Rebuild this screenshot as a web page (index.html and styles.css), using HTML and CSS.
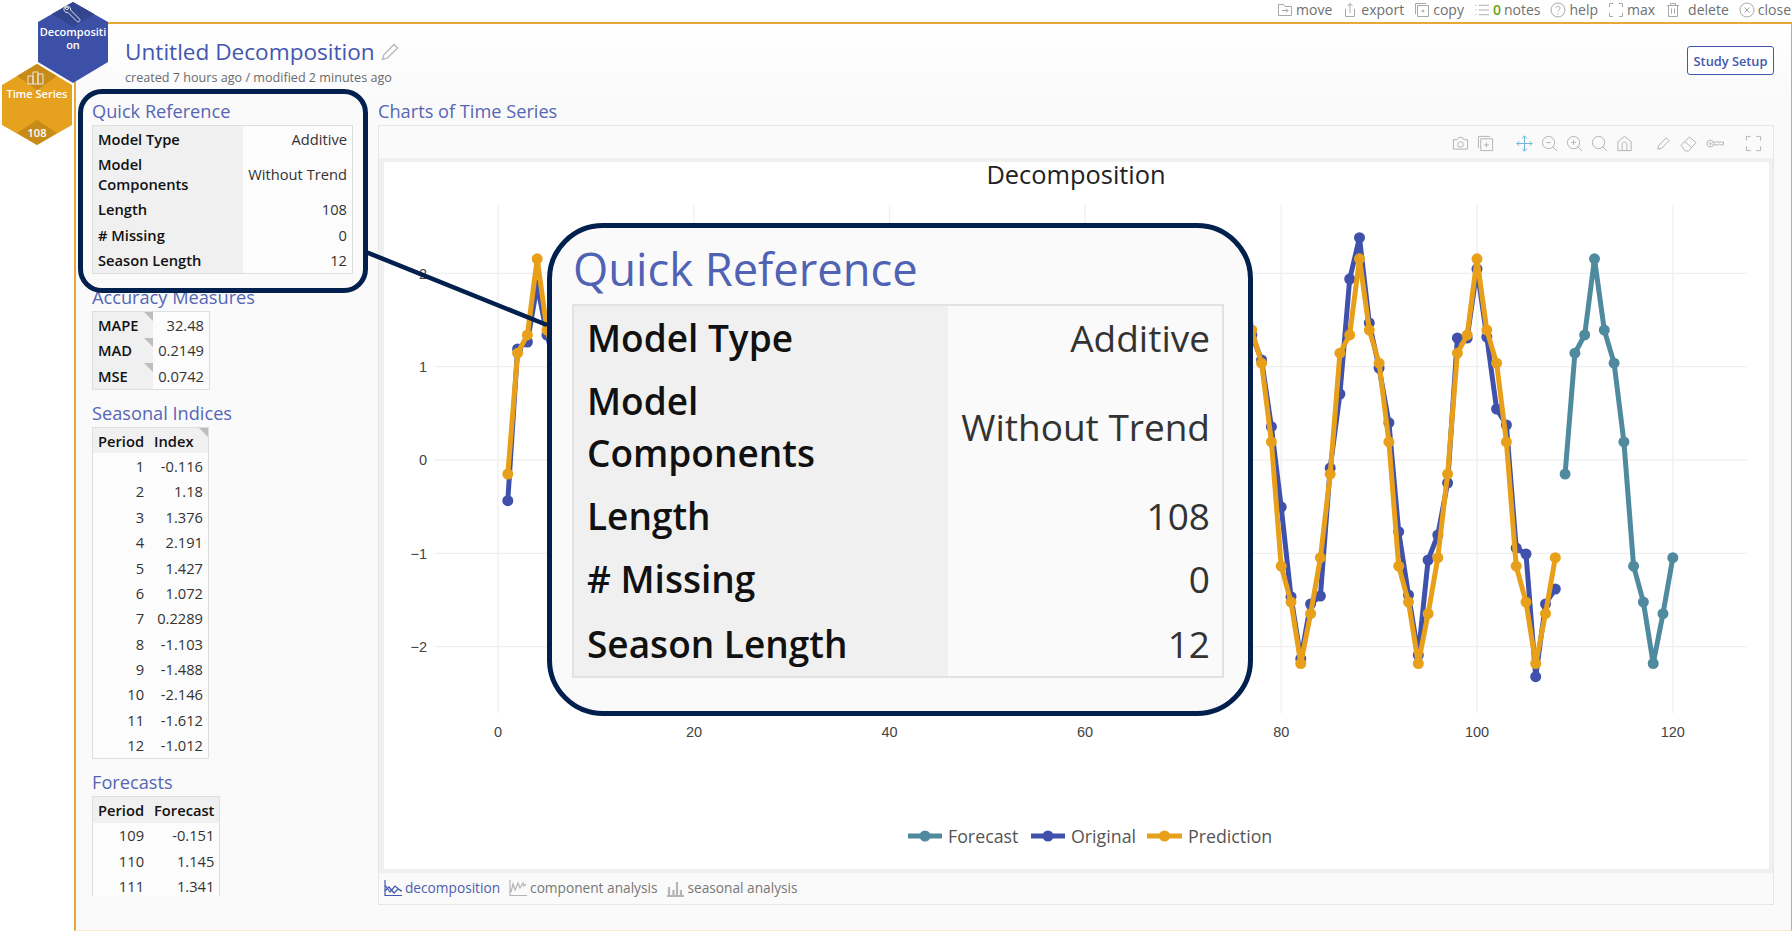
FILE: index.html
```html
<!DOCTYPE html>
<html lang="en">
<head>
<meta charset="utf-8">
<title>Untitled Decomposition</title>
<link rel="stylesheet" href="styles.css">
</head>
<body>
<div class="page">
  <nav class="topbar">
    <span class="tool"><svg class="ic" viewBox="0 0 16 16"><path d="M1.500 2.500h5l1.500 2h6.500v9h-13z"/><path d="M5 8.500h6M9 6.500l2 2-2 2"/></svg>move</span>
    <span class="tool"><svg class="ic" viewBox="0 0 16 16"><path d="M8 11V1.500M5.500 4 8 1.500 10.500 4M3.500 7v7.500h9V7"/></svg>export</span>
    <span class="tool"><svg class="ic" viewBox="0 0 16 16"><path d="M1.500 12V1.500H12"/><path d="M3.500 3.500h11v11h-11zM9 7.500v3M7.500 9h3"/></svg>copy</span>
    <span class="tool"><svg class="ic" viewBox="0 0 17 16"><path d="M5 3h11M5 8h11M5 13h11M1.500 3h1M1.500 8h1M1.500 13h1"/></svg><b class="zero">0</b>notes</span>
    <span class="tool"><svg class="ic" viewBox="0 0 16 16"><circle cx="8" cy="8" r="7"/><path d="M6 6.200c0-2.600 4-2.600 4 0 0 1.600-2 1.600-2 3.300M8 11v1.200"/></svg>help</span>
    <span class="tool"><svg class="ic" viewBox="0 0 16 16"><path d="M1.500 5V1.500H5M11 1.500h3.500V5M14.500 11v3.500H11M5 14.500H1.500V11"/></svg>max</span>
    <span class="tool tool-wide"><svg class="ic" viewBox="0 0 16 16"><path d="M2 3.500h12M5.500 3.500V1.500h5v2M3.500 3.500v11h9v-11M6.500 6.500v5M9.500 6.500v5"/></svg>delete</span>
    <span class="tool"><svg class="ic" viewBox="0 0 16 16"><circle cx="8" cy="8" r="7"/><path d="m5.500 5.500 5 5M10.500 5.500l-5 5"/></svg>close</span>
  </nav>

  <div class="frame">
    <header class="head">
      <div class="head-text">
        <h1 class="title">Untitled Decomposition <svg class="pencil" viewBox="0 0 18 18"><path d="M1.500 16.500 3 11.500 13 1.500l3.500 3.500-10 10z"/></svg></h1>
        <p class="stamp">created 7 hours ago / modified 2 minutes ago</p>
      </div>
      <button class="setup">Study Setup</button>
    </header>

    <div class="body">
      <aside class="side">
        <section class="sec">
          <h2 class="sec-title">Quick Reference</h2>
          <table class="tbl tbl-qr">
            <tr><th>Model Type</th><td>Additive</td></tr>
            <tr><th>Model<br>Components</th><td>Without Trend</td></tr>
            <tr><th>Length</th><td>108</td></tr>
            <tr><th># Missing</th><td>0</td></tr>
            <tr><th>Season Length</th><td>12</td></tr>
          </table>
        </section>
        <section class="sec">
          <h2 class="sec-title">Accuracy Measures</h2>
          <table class="tbl tbl-acc">
            <tr><th class="note">MAPE</th><td>32.48</td></tr>
            <tr><th class="note">MAD</th><td>0.2149</td></tr>
            <tr><th class="note">MSE</th><td>0.0742</td></tr>
          </table>
        </section>
        <section class="sec">
          <h2 class="sec-title">Seasonal Indices</h2>
          <table class="tbl tbl-grid tbl-si">
            <thead><tr><th>Period</th><th class="note">Index</th></tr></thead>
            <tbody>
              <tr><td>1</td><td>-0.116</td></tr>
              <tr><td>2</td><td>1.18</td></tr>
              <tr><td>3</td><td>1.376</td></tr>
              <tr><td>4</td><td>2.191</td></tr>
              <tr><td>5</td><td>1.427</td></tr>
              <tr><td>6</td><td>1.072</td></tr>
              <tr><td>7</td><td>0.2289</td></tr>
              <tr><td>8</td><td>-1.103</td></tr>
              <tr><td>9</td><td>-1.488</td></tr>
              <tr><td>10</td><td>-2.146</td></tr>
              <tr><td>11</td><td>-1.612</td></tr>
              <tr><td>12</td><td>-1.012</td></tr>
            </tbody>
          </table>
        </section>
        <section class="sec">
          <h2 class="sec-title">Forecasts</h2>
          <table class="tbl tbl-grid tbl-fc">
            <thead><tr><th>Period</th><th>Forecast</th></tr></thead>
            <tbody>
              <tr><td>109</td><td>-0.151</td></tr>
              <tr><td>110</td><td>1.145</td></tr>
              <tr><td>111</td><td>1.341</td></tr>
            </tbody>
          </table>
        </section>
      </aside>

      <main class="charts">
        <h2 class="sec-title">Charts of Time Series</h2>
        <div class="panel">
          <div class="modebar">
            <svg class="mb" viewBox="0 0 18 18"><path d="M1.500 5h4l1.500-2.500h4L12.500 5h4v10h-15z"/><circle cx="9" cy="10" r="3"/></svg>
            <svg class="mb" viewBox="0 0 18 18"><path d="M1.500 14V1.500H14"/><path d="M4 4h12.500v12.500H4zM10 8v5M7.500 10.500h5"/></svg>
            <svg class="mb mb-blue mb-g2" viewBox="0 0 18 18"><path d="M9 1v16M1 9h16M6.500 3.500 9 1l2.500 2.500M6.500 14.500 9 17l2.500-2.500M3.500 6.500 1 9l2.500 2.500M14.500 6.500 17 9l-2.500 2.500"/></svg>
            <svg class="mb" viewBox="0 0 18 18"><circle cx="8" cy="8" r="6.500"/><path d="m12.500 12.500 4.500 4.500M5.500 8h5"/></svg>
            <svg class="mb" viewBox="0 0 18 18"><circle cx="8" cy="8" r="6.500"/><path d="m12.500 12.500 4.500 4.500M5.500 8h5M8 5.500v5"/></svg>
            <svg class="mb" viewBox="0 0 18 18"><circle cx="8" cy="8" r="6.500"/><path d="m12.500 12.500 4.500 4.500"/></svg>
            <svg class="mb" viewBox="0 0 18 18"><path d="M2 16.500V7l7-5.500L16 7v9.500zM6.500 16.500V9.500c0-2.800 5-2.800 5 0v7"/></svg>
            <svg class="mb mb-g2" viewBox="0 0 18 18"><path d="m3 15 1-4 8-8 3 3-8 8z"/></svg>
            <svg class="mb" viewBox="0 0 18 18"><path d="M1 11 10 2l7 6-8 9h-3zM5 7l7 6"/></svg>
            <svg class="mb mb-wide" viewBox="0 0 20 18"><circle cx="5" cy="9" r="3.500"/><circle cx="5" cy="9" r="1"/><path d="M8.500 7.500H19v3h-3l-1-1-1 1H8.500"/></svg>
            <svg class="mb mb-g4" viewBox="0 0 18 18"><path d="M1.500 6V1.500H6M12 1.500h4.500V6M16.500 12v4.500H12M6 16.500H1.500V12"/></svg>
          </div>
          <div class="plot">
            <svg class="plot-svg" viewBox="384 162 1385 707">
              <defs>
                <marker id="dot-b" markerUnits="userSpaceOnUse" markerWidth="12" markerHeight="12" refX="6" refY="6"><circle cx="6" cy="6" r="5.500" fill="#3f51ab"/></marker>
                <marker id="dot-o" markerUnits="userSpaceOnUse" markerWidth="12" markerHeight="12" refX="6" refY="6"><circle cx="6" cy="6" r="5.500" fill="#e8a01a"/></marker>
                <marker id="dot-t" markerUnits="userSpaceOnUse" markerWidth="12" markerHeight="12" refX="6" refY="6"><circle cx="6" cy="6" r="5.500" fill="#4f8a9e"/></marker>
              </defs>
              <text class="chart-title" x="1076" y="184" text-anchor="middle">Decomposition</text>
              <g class="grid">
                <path d="M498 205V713M694 205V713M889.500 205V713M1085 205V713M1281.200 205V713M1477 205V713M1672.800 205V713"/>
                <path d="M435 273.400H1747M435 366.700H1747M435 460H1747M435 553.300H1747M435 646.600H1747"/>
              </g>
              <g class="ticks">
                <text x="427" y="278.500" text-anchor="end">2</text>
                <text x="427" y="372" text-anchor="end">1</text>
                <text x="427" y="465" text-anchor="end">0</text>
                <text x="427" y="558.500" text-anchor="end">−1</text>
                <text x="427" y="652" text-anchor="end">−2</text>
                <text x="498" y="737" text-anchor="middle">0</text>
                <text x="694" y="737" text-anchor="middle">20</text>
                <text x="889.500" y="737" text-anchor="middle">40</text>
                <text x="1085" y="737" text-anchor="middle">60</text>
                <text x="1281.200" y="737" text-anchor="middle">80</text>
                <text x="1477" y="737" text-anchor="middle">100</text>
                <text x="1672.800" y="737" text-anchor="middle">120</text>
              </g>
              <polyline class="s s-t" points="1565.100,474.100 1574.900,353.200 1584.700,334.900 1594.500,258.800 1604.300,330.100 1614.100,363.200 1623.900,441.900 1633.600,566.200 1643.400,602.100 1653.200,663.500 1663,613.700 1672.800,557.700"/>
              <polyline class="s s-b" points="507.800,500.700 517.600,349 527.400,342 537.200,285 547,335 556.700,370"/>
              <polyline class="s s-b" points="1242,270 1251.800,335 1261.600,360 1271.400,426.700 1281.200,507 1291,596.700 1300.800,658.700 1310.600,604 1320.400,596 1330.200,468 1339.900,394 1349.700,279 1359.500,237.700 1369.300,323 1379.100,368 1388.900,422.700 1398.700,531.700 1408.500,595 1418.300,655 1428.100,560 1437.800,535 1447.600,483 1457.400,338 1467.200,338 1477,269 1486.800,337 1496.600,409 1506.400,425 1516.200,548 1526,554 1535.700,676.700 1545.500,604 1555.300,589"/>
              <polyline class="s s-o" points="507.800,474.100 517.600,353.200 527.400,334.900 537.200,258.800 547,330.100 556.700,363.200"/>
              <polyline class="s s-o" points="1242,258.800 1251.800,330.100 1261.600,363.200 1271.400,441.900 1281.200,566.200 1291,602.100 1300.800,663.500 1310.600,613.700 1320.400,557.700 1330.200,474.100 1339.900,353.200 1349.700,334.900 1359.500,258.800 1369.300,330.100 1379.100,363.200 1388.900,441.900 1398.700,566.200 1408.500,602.100 1418.300,663.500 1428.100,613.700 1437.800,557.700 1447.600,474.100 1457.400,353.200 1467.200,334.900 1477,258.800 1486.800,330.100 1496.600,363.200 1506.400,441.900 1516.200,566.200 1526,602.100 1535.700,663.500 1545.500,613.700 1555.300,557.700"/>
              <g class="legend">
                <path class="lg lg-t" d="M908 836H942"/><circle class="lgd-t" cx="925" cy="836" r="5.500"/>
                <text x="948" y="843">Forecast</text>
                <path class="lg lg-b" d="M1031 836H1065"/><circle class="lgd-b" cx="1048" cy="836" r="5.500"/>
                <text x="1071" y="843">Original</text>
                <path class="lg lg-o" d="M1147 836H1182"/><circle class="lgd-o" cx="1164.500" cy="836" r="5.500"/>
                <text x="1188" y="843">Prediction</text>
              </g>
            </svg>
          </div>
          <div class="tabs">
            <span class="tab tab-on"><svg class="tab-ic" viewBox="0 0 18 18"><path d="M1 1v15.500h17M1 6l5 7 5-6 6 5M1 12l4-4 5 6 4-4 4 2"/></svg>decomposition</span>
            <span class="tab"><svg class="tab-ic" viewBox="0 0 18 18"><path d="M1 1v15.500h17M2 13l2-8 2 6 3-7 2 5 3-5 1 3 2-2"/></svg>component analysis</span>
            <span class="tab"><svg class="tab-ic tab-bars" viewBox="0 0 18 18"><path d="M1 17h17M3 17V8M7.500 17V11M11 17V3M15 17v-6"/></svg>seasonal analysis</span>
          </div>
        </div>
      </main>
    </div>
  </div>

  <svg class="hexes" viewBox="0 0 110 146">
    <polygon class="hx-o" points="37,64 72,85 72,125 37,145 2,125 2,85"/>
    <polygon class="hx-oc" points="37,64 57,76 37,90 17,76"/>
    <polygon class="hx-oc" points="37,145 17,133 37,120 57,133"/>
    <path class="hx-ic" d="M28 84V76h5v8zM33 84V72h5v12zM38 84V74h5v10z"/>
    <text class="hx-t" x="37" y="98" text-anchor="middle">Time Series</text>
    <text class="hx-t" x="37" y="137" text-anchor="middle">108</text>
    <polygon class="hx-b" points="73,2 108,22 108,62 73,83 38,62 38,22"/>
    <polygon class="hx-bc" points="73,2 94,14 73,27 52,14"/>
    <path class="hx-ic" d="M65 7c3-2 6 0 5.500 3l9 9c1.500 1.500-1 4-2.500 2.500l-9-9c-3 .5-5-2.500-3.500-5l2.500 2.500 2-2z"/>
    <text class="hx-t" x="73" y="36" text-anchor="middle">Decompositi</text>
    <text class="hx-t" x="73" y="49" text-anchor="middle">on</text>
  </svg>

  <div class="ring"></div>
  <svg class="connector" viewBox="0 0 190 80"><path d="M0 3 181 76"/></svg>

  <div class="callout">
    <h2 class="co-title">Quick Reference</h2>
    <table class="co-tbl">
      <tr><th>Model Type</th><td>Additive</td></tr>
      <tr><th>Model<br>Components</th><td>Without Trend</td></tr>
      <tr><th>Length</th><td>108</td></tr>
      <tr><th># Missing</th><td>0</td></tr>
      <tr class="co-last"><th>Season Length</th><td>12</td></tr>
    </table>
  </div>
</div>
</body>
</html>
```
FILE: styles.css
```css
* { box-sizing: border-box; }
html, body { margin: 0; padding: 0; background: #fff; }
body { font-family: "Open Sans", "Noto Sans", sans-serif; color: #222; }

.page { position: relative; width: 1792px; height: 931px; overflow: hidden; background: #fff; }

/* top tool strip */
.topbar { height: 20px; margin-bottom: 2px; display: flex; justify-content: flex-end; align-items: center; gap: 10px; padding-right: 1px; font-size: 14px; color: #6f6f6f; }
.tool { display: inline-flex; align-items: center; gap: 3px; line-height: 20px; }
.tool-wide { gap: 7px; }
.ic { width: 16px; height: 16px; fill: none; stroke: #a8a8a8; stroke-width: 1; }
.zero { color: #6aa51e; font-weight: 600; }

/* main frame */
.frame { margin-left: 74px; height: 909px; border: 2px solid #e8a838; border-right-width: 1px; border-bottom: 1px solid #fbeacb; background: #fafafa; }
.head { height: 75px; padding: 13px 17px 0 49px; display: flex; justify-content: space-between; align-items: flex-start; background: linear-gradient(#fff, #fafafa); }
.title { margin: 0; font-size: 22.600px; font-weight: 400; line-height: 30px; color: #4357ad; display: flex; align-items: center; gap: 6px; }
.pencil { width: 18px; height: 18px; fill: none; stroke: #b5b5b5; stroke-width: 1.300; }
.stamp { margin: 2px 0 0; font-size: 12.600px; line-height: 17px; color: #6a6a6a; }
.setup { margin-top: 9px; width: 87px; height: 29px; padding: 0; border: 1px solid #4357ad; border-radius: 3px; background: #fff; color: #4357ad; font: 600 12.800px "Open Sans", sans-serif; }

.body { display: flex; }
.side { width: 302px; height: 797px; padding-left: 16px; overflow: hidden; }
.sec { margin-bottom: 11.500px; }
.sec-title { margin: 0; padding-bottom: 2px; font-size: 18.200px; font-weight: 400; line-height: 24px; color: #5566b5; }

/* data tables */
.tbl { border-collapse: collapse; border: 1px solid #dedede; font-size: 14.700px; background: #fcfcfc; }
.tbl th, .tbl td { line-height: 20px; padding: 2.700px 5px; white-space: nowrap; }
.tbl th { position: relative; font-weight: 600; text-align: left; background: #f0f0f0; color: #111; }
.tbl td { text-align: right; color: #333; }
.tbl-qr { width: 261px; }
.tbl-qr th { width: 151px; }
.tbl-acc { width: 118px; }
.tbl-acc th { width: 60px; }
.tbl-si { width: 117px; }
.tbl-fc { width: 128px; }
.tbl-grid th:first-child, .tbl-grid td:first-child { width: 56px; }
.note::after { content: ""; position: absolute; top: 0; right: 0; border-top: 9px solid #bdbdbd; border-left: 9px solid transparent; }

/* chart panel */
.charts { width: 1396px; }
.panel { width: 1396px; height: 780px; border: 1px solid #e6e6e6; background: #fafafa; }
.modebar { height: 32px; display: flex; justify-content: flex-end; align-items: center; padding: 2px 11px 0 0; gap: 8px; }
.mb { width: 17px; height: 17px; fill: none; stroke: #b0b0b0; stroke-width: 1; flex: none; }
.mb-blue { stroke: #66b3d6; }
.mb-g2 { margin-left: 14px; }
.mb-wide { width: 20px; }
.mb-g4 { margin-left: 12px; }
.plot { height: 715px; border: solid #f0f0f0; border-width: 4px 4px 4px 5px; background: #fff; }
.plot-svg { display: block; width: 1385px; height: 707px; overflow: visible; }
.chart-title { font: 25.400px "Open Sans", sans-serif; fill: #222; }
.grid path { fill: none; stroke: #efefef; stroke-width: 1.300; }
.ticks text { font: 14.500px "Liberation Sans", Arial, sans-serif; fill: #444; }
.s { fill: none; stroke-width: 5; stroke-linejoin: round; }
.s-b { stroke: #3f51ab; marker-start: url(#dot-b); marker-mid: url(#dot-b); marker-end: url(#dot-b); }
.s-o { stroke: #e8a01a; marker-start: url(#dot-o); marker-mid: url(#dot-o); marker-end: url(#dot-o); }
.s-t { stroke: #4f8a9e; marker-start: url(#dot-t); marker-mid: url(#dot-t); marker-end: url(#dot-t); }
.legend text { font: 17.800px "Open Sans", sans-serif; fill: #555; }
.lg { stroke-width: 5; fill: none; }
.lg-t { stroke: #4f8a9e; }
.lg-b { stroke: #3f51ab; }
.lg-o { stroke: #e8a01a; }
.lgd-t { fill: #4f8a9e; }
.lgd-b { fill: #3f51ab; }
.lgd-o { fill: #e8a01a; }
.tabs { height: 29px; display: flex; align-items: center; gap: 9px; padding-left: 5px; font-size: 13.700px; color: #777; }
.tab { display: inline-flex; align-items: center; gap: 3px; }
.tab-on { color: #4a5db0; }
.tab-ic { width: 18px; height: 18px; fill: none; stroke: #b5b5b5; stroke-width: 1.200; }
.tab-on .tab-ic { stroke: #4357ad; }
.tab-bars { stroke-width: 2.200; }

/* hexagon badges */
.hexes { position: absolute; left: 0; top: 0; width: 110px; height: 146px; }
.hx-b { fill: #3d50a8; }
.hx-bc { fill: #33458f; }
.hx-o { fill: #e6a11e; }
.hx-oc { fill: #c78b17; }
.hx-ic { fill: none; stroke: #e8e8e8; stroke-width: 1; }
.hx-t { font: 600 11px "Open Sans", sans-serif; fill: #fff; }

/* annotation overlays */
.ring { position: absolute; left: 78px; top: 89px; width: 290px; height: 204px; border: 5px solid #02204d; border-radius: 24px; }
.connector { position: absolute; left: 366px; top: 249px; width: 190px; height: 80px; fill: none; stroke: #02204d; stroke-width: 4.500; }
.callout { position: absolute; left: 547px; top: 223px; width: 706px; height: 493px; padding: 11px 24px 0 20px; border: 5px solid #02204d; border-radius: 56px; background: #fafafa; }
.co-title { margin: 0 0 6px 1px; font-size: 45.300px; font-weight: 400; line-height: 59px; color: #4f62b4; }
.co-tbl { width: 652px; border-collapse: collapse; border: 2px solid #e2e2e2; font-size: 37px; line-height: 52px; }
.co-tbl th, .co-tbl td { padding: 5.500px 12px 5.500px 13px; white-space: nowrap; }
.co-tbl .co-last th, .co-tbl .co-last td { padding-top: 8px; }
.co-tbl th { width: 377px; text-align: left; font-weight: 600; background: #f0f0f0; color: #111; }
.co-tbl td { text-align: right; color: #333; }
```
